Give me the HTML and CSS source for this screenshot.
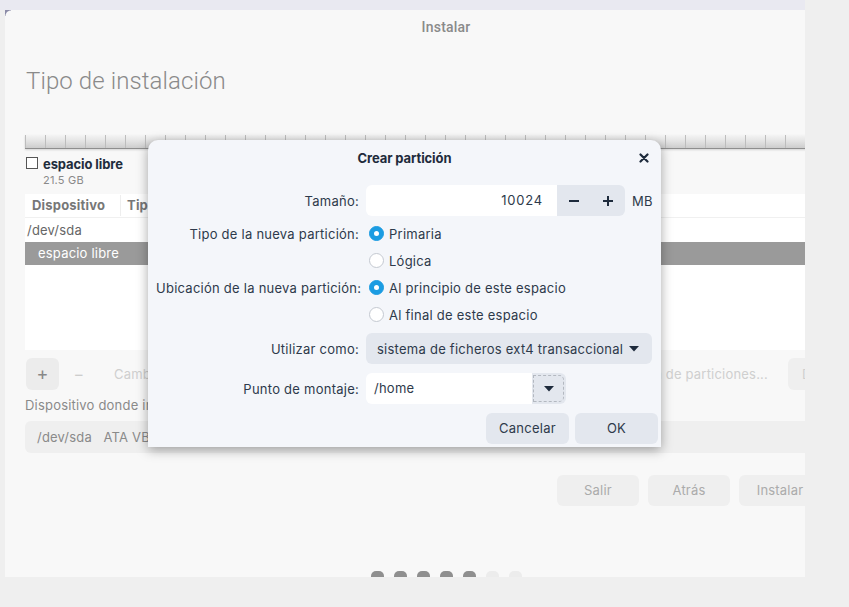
FILE: index.html
```html
<!DOCTYPE html>
<html lang="es">
<head>
<meta charset="utf-8">
<title>Instalar</title>
<link rel="stylesheet" href="styles.css">
</head>
<body>
<div class="screen">
  <div class="topstrip"></div>
  <div class="window">
    <div class="win-inner">
      <div class="titlebar">Instalar</div>
      <h1 class="heading">Tipo de instalación</h1>
      <div class="partbar"></div>
      <div class="legend">
        <span class="chk"></span>
        <div class="legend-text">
          <div class="legend-name">espacio libre</div>
          <div class="legend-size">21.5 GB</div>
        </div>
      </div>
      <div class="table">
        <div class="thead">
          <div class="th th-dev">Dispositivo</div>
          <div class="th th-type">Tipo</div>
        </div>
        <div class="tr">/dev/sda</div>
        <div class="tr tr-sel">espacio libre</div>
      </div>
      <div class="toolbar">
        <div class="tbtn tbtn-plus">+</div>
        <div class="tbtn tbtn-minus">−</div>
        <div class="tbtn tbtn-text">Cambiar...</div>
        <div class="tspacer"></div>
        <div class="tbtn tbtn-text tbtn-new">Nueva tabla de particiones...</div>
        <div class="tbtn tbtn-undo">Deshacer</div>
      </div>
      <div class="devlabel">Dispositivo donde instalar el cargador de arranque:</div>
      <div class="devcombo">/dev/sda&nbsp;&nbsp;&nbsp;ATA VBOX HARDDISK (21.5 GB)</div>
      <div class="navrow">
        <div class="navbtn">Salir</div>
        <div class="navbtn">Atrás</div>
        <div class="navbtn">Instalar</div>
      </div>
      <div class="dots">
        <span class="dot on"></span><span class="dot on"></span><span class="dot on"></span><span class="dot on"></span><span class="dot on"></span><span class="dot"></span><span class="dot"></span>
      </div>
    </div>
  </div>

  <div class="dialog">
    <div class="dlg-head">
      <div class="dlg-title">Crear partición</div>
      <svg class="dlg-close" width="10" height="10" viewBox="0 0 10 10"><path d="M1.5 1.5 L8.5 8.5 M8.5 1.5 L1.5 8.5" stroke="#1e2b3c" stroke-width="2.2" stroke-linecap="round"/></svg>
    </div>
    <div class="dlg-body">
      <div class="frow frow-size">
        <div class="flabel">Tamaño:</div>
        <div class="spin">
          <div class="spin-entry">10024</div>
          <div class="spin-btn"><svg width="12" height="12" viewBox="0 0 12 12"><path d="M1 6 H11" stroke="#1e2b3c" stroke-width="2"/></svg></div>
          <div class="spin-btn"><svg width="12" height="12" viewBox="0 0 12 12"><path d="M1 6 H11 M6 1 V11" stroke="#1e2b3c" stroke-width="2"/></svg></div>
        </div>
        <div class="unit">MB</div>
      </div>
      <div class="frow frow-radio frow-first">
        <div class="flabel">Tipo de la nueva partición:</div>
        <div class="radio"><span class="rdot on"></span>Primaria</div>
      </div>
      <div class="frow frow-radio">
        <div class="flabel"></div>
        <div class="radio"><span class="rdot"></span>Lógica</div>
      </div>
      <div class="frow frow-radio">
        <div class="flabel">Ubicación de la nueva partición:</div>
        <div class="radio"><span class="rdot on"></span>Al principio de este espacio</div>
      </div>
      <div class="frow frow-radio">
        <div class="flabel"></div>
        <div class="radio"><span class="rdot"></span>Al final de este espacio</div>
      </div>
      <div class="frow frow-combo">
        <div class="flabel">Utilizar como:</div>
        <div class="combo">
          <span>sistema de ficheros ext4 transaccional</span>
          <svg class="arrow" width="10" height="6" viewBox="0 0 10 6"><path d="M0 0 H10 L5 5.5 Z" fill="#1e2b3c"/></svg>
        </div>
      </div>
      <div class="frow frow-mount">
        <div class="flabel">Punto de montaje:</div>
        <div class="mount">
          <div class="mount-entry">/home</div>
          <div class="mount-btn"><span class="focusring"><svg width="10" height="6" viewBox="0 0 10 6"><path d="M0 0 H10 L5 5.5 Z" fill="#1e2b3c"/></svg></span></div>
        </div>
      </div>
      <div class="dlg-buttons">
        <div class="dbtn">Cancelar</div>
        <div class="dbtn">OK</div>
      </div>
    </div>
  </div>
</div>
</body>
</html>
```
FILE: styles.css
```css
* { box-sizing: border-box; }
html, body { margin: 0; padding: 0; }
body {
  background: #efefef;
  font-family: Inter, "Noto Sans", sans-serif;
  font-size: 13px;
  width: 849px;
  height: 607px;
  overflow: hidden;
}
.screen { position: relative; width: 849px; height: 607px; }
.topstrip { height: 10px; width: 805px; background: #e9e9f1; }
.window {
  position: relative;
  margin-left: 5px;
  width: 800px;
  height: 567px;
  background: #f8f8f8;
  overflow: hidden;
}
.window::before {
  content: "";
  position: absolute;
  left: 0; top: 0;
  width: 6px; height: 6px;
  background: radial-gradient(circle at 100% 100%, transparent 5px, #8c8ca8 6px);
}
.win-inner {
  width: 882px;
  padding: 0 20px;
  display: flex;
  flex-direction: column;
  letter-spacing: 0.2px;
}
.titlebar {
  height: 34px;
  line-height: 34px;
  text-align: center;
  font-family: Roboto, sans-serif;
  font-weight: 500;
  font-size: 14px;
  letter-spacing: 0.2px;
  color: #8a8a8a;
}
.heading {
  margin: 23px 0 0 1px;
  font-family: Roboto, sans-serif;
  font-weight: 300;
  font-size: 24px;
  line-height: 28px;
  letter-spacing: 0.1px;
  color: #8a8a8a;
}
.partbar {
  margin-top: 40px;
  height: 14px;
  border-bottom: 1px solid #8e8e8e;
  background:
    repeating-linear-gradient(90deg, #bdbdbd 0 1px, transparent 1px 20px),
    linear-gradient(#f4f4f4, #e4e4e4 45%, #cdcdcd);
  box-shadow: 0 1px 2px rgba(0,0,0,0.15);
}
.legend { margin-top: 7px; display: flex; align-items: flex-start; }
.chk {
  width: 12px; height: 12px;
  margin: 1px 5px 0 1px;
  border: 1px solid #555;
  background: #fff;
}
.legend-name { font-weight: 700; font-size: 13px; line-height: 16px; color: #1f2d3d; letter-spacing: -0.1px; }
.legend-size { font-size: 11px; line-height: 16px; color: #8a8a8a; }
.table {
  margin-top: 6px;
  height: 156px;
  background: #fff;
}
.thead { display: flex; height: 24px; border-bottom: 1px solid #f0f0f0; }
.th { font-weight: 700; color: #777; line-height: 23px; padding-left: 7px; }
.th-dev { width: 96px; border-right: 1px solid #eee; margin: 1px 0; line-height: 21px; }
.th-type { padding-left: 6px; }
.tr { height: 24px; line-height: 25px; padding-left: 2px; color: #666; }
.tr-sel { background: #9a9a9a; color: #fff; padding-left: 13px; height: 23px; line-height: 23px; }
.toolbar { margin-top: 8px; height: 32px; display: flex; align-items: center; }
.tbtn { height: 32px; line-height: 32px; border-radius: 6px; color: #cfcfcf; }
.tbtn-plus { width: 33px; margin-left: 1px; background: #ececec; color: #888; text-align: center; font-size: 18px; }
.tbtn-minus { width: 40px; text-align: center; font-size: 16px; color: #cdcdcd; }
.tbtn-text { padding: 0 14px 0 15px; }
.tspacer { flex: 1; }
.tbtn-new { padding-right: 11px; }
.tbtn-undo { width: 79px; margin-left: 9px; padding-left: 14px; background: #efefef; color: #cfcfcf; }
.devlabel { margin-top: 7px; line-height: 16px; color: #8a8a8a; }
.devcombo {
  margin-top: 8px;
  height: 32px;
  line-height: 32px;
  padding-left: 12px;
  background: #efefef;
  border-radius: 6px;
  color: #8a8a8a;
}
.navrow {
  margin-top: 22px;
  display: flex;
  justify-content: flex-end;
  gap: 9px;
  padding-right: 46px;
}
.navbtn {
  width: 82px; height: 31px; line-height: 31px;
  text-align: center;
  background: #efefef;
  border-radius: 6px;
  color: #ababab;
}
.dots { margin-top: 65px; display: flex; justify-content: center; gap: 10px; }
.dot { width: 13px; height: 13px; border-radius: 5px; background: #ececec; }
.dot.on { background: #8f8f8f; }

/* dialog */
.dialog {
  position: absolute;
  left: 148px; top: 140px;
  width: 513px; height: 307px;
  background: #f4f6fa;
  border-radius: 10px 10px 0 0;
  box-shadow: 0 3px 12px rgba(0,0,0,0.35);
  color: #2e3a4b;
  letter-spacing: 0.25px;
}
.dlg-head { position: relative; height: 35px; display: flex; align-items: center; justify-content: center; }
.dlg-title { font-weight: 700; font-size: 13px; color: #1e2b3c; letter-spacing: -0.1px; }
.dlg-close { position: absolute; right: 12px; top: 13px; }
.dlg-body { padding: 10px 3px 0 8px; }
.frow { display: flex; align-items: center; gap: 7px; }
.flabel { width: 203px; text-align: right; white-space: nowrap; }
.frow-size { height: 31px; }
.frow-radio { height: 27px; }
.frow-first { margin-top: 4px; }
.spin { display: flex; height: 31px; border-radius: 6px; overflow: hidden; }
.spin-entry { width: 191px; background: #fff; text-align: right; padding-right: 14px; line-height: 31px; letter-spacing: 0.8px; }
.spin-btn { width: 34px; background: #e3e7ee; display: flex; align-items: center; justify-content: center; }
.radio { display: flex; align-items: center; margin-left: 3px; }
.rdot {
  width: 15px; height: 15px; border-radius: 50%;
  background: #fff; border: 1px solid #c4c9d1;
  margin-right: 5px;
  display: flex; align-items: center; justify-content: center;
}
.rdot.on { background: #1b9ce2; border-color: #1b9ce2; }
.rdot.on::after { content: ""; width: 5px; height: 5px; border-radius: 50%; background: #fff; }
.frow-combo { margin-top: 5px; height: 31px; }
.combo {
  width: 286px; height: 31px;
  background: #e3e7ee; border-radius: 6px;
  display: flex; align-items: center; justify-content: space-between;
  padding: 0 13px 0 11px;
}
.frow-mount { margin-top: 9px; height: 31px; }
.mount { display: flex; height: 31px; }
.mount-entry { width: 166px; background: #fff; border-radius: 6px 0 0 6px; padding-left: 8px; line-height: 31px; }
.mount-btn { width: 34px; background: #e3e7ee; border-radius: 0 6px 6px 0; padding: 2px 2px 2px 1px; }
.focusring {
  display: flex; align-items: center; justify-content: center;
  width: 100%; height: 100%;
  border: 1px dashed #b3b8c0; border-radius: 0 5px 5px 0;
}
.dlg-buttons { margin-top: 9px; display: flex; justify-content: flex-end; gap: 6px; }
.dbtn {
  width: 83px; height: 31px; line-height: 31px;
  text-align: center; background: #e3e7ee; border-radius: 6px;
}
```
